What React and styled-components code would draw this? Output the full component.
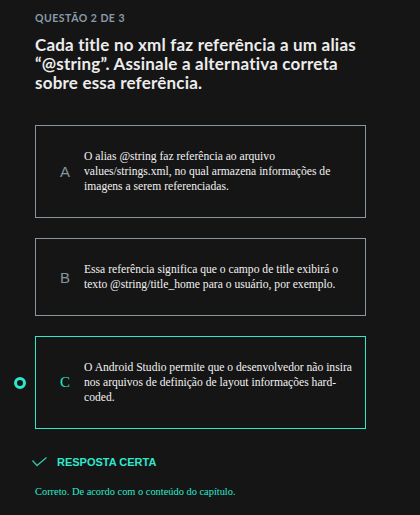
import React from "react";
import styled, { createGlobalStyle } from "styled-components";

const teal = "#2ee8cc";

const GlobalStyle = createGlobalStyle`
  html, body {
    margin: 0;
    background: #151515;
  }
`;

const options = [
  {
    letter: "A",
    text: "O alias @string faz referência ao arquivo values/strings.xml, no qual armazena informações de imagens a serem referenciadas.",
  },
  {
    letter: "B",
    text: "Essa referência significa que o campo de title exibirá o texto @string/title_home para o usuário, por exemplo.",
  },
  {
    letter: "C",
    text: "O Android Studio permite que o desenvolvedor não insira nos arquivos de definição de layout informações hard-coded.",
    selected: true,
  },
];

function App() {
  return (
    <>
      <GlobalStyle />
      <Page>
        <Gutter />
        <Header>
          <Counter>QUESTÃO 2 DE 3</Counter>
          <Title>
            Cada title no xml faz referência a um alias “@string”. Assinale a
            alternativa correta sobre essa referência.
          </Title>
        </Header>

        {options.map((opt) => (
          <React.Fragment key={opt.letter}>
            <Gutter>{opt.selected && <Radio />}</Gutter>
            <OptionBox $selected={opt.selected}>
              <Letter $selected={opt.selected}>{opt.letter}</Letter>
              <OptionText>{opt.text}</OptionText>
            </OptionBox>
          </React.Fragment>
        ))}

        <Gutter />
        <Feedback>
          <Verdict>
            <svg width="15" height="10" viewBox="0 0 15 10">
              <polyline
                points="0.5,3.5 5,8.5 14.5,0.5"
                fill="none"
                stroke="#3bbfae"
                strokeWidth="1.3"
              />
            </svg>
            <span>RESPOSTA CERTA</span>
          </Verdict>
          <Comment>Correto. De acordo com o conteúdo do capítulo.</Comment>
        </Feedback>
      </Page>
    </>
  );
}

export default App;

const Page = styled.div`
  display: grid;
  grid-template-columns: 35px 331px;
  row-gap: 20px;
  padding-top: 11px;
`;

const Gutter = styled.div`
  display: flex;
  align-items: center;
  justify-content: center;
  padding-left: 5px;
`;

const Header = styled.div`
  display: flex;
  flex-direction: column;
  gap: 10px;
  margin-bottom: 13px;
`;

const Counter = styled.div`
  font-family: Lato, sans-serif;
  font-weight: 700;
  font-size: 10.5px;
  line-height: 14px;
  color: #8b9ba7;
  letter-spacing: 0.5px;
`;

const Title = styled.h1`
  margin: 0;
  font-family: Lato, sans-serif;
  font-weight: 700;
  font-size: 17px;
  line-height: 19px;
  color: #ececec;
  letter-spacing: 0.2px;
`;

const OptionBox = styled.div`
  display: flex;
  align-items: center;
  border: 1px solid ${(p) => (p.$selected ? teal : "#8a969e")};
  padding: 23px 6px 23px 22px;
  min-height: 30px;
`;

const Letter = styled.div`
  width: 14px;
  flex-shrink: 0;
  margin-right: 12px;
  text-align: center;
  font-family: ${(p) =>
    p.$selected ? '"Liberation Serif", serif' : '"Liberation Sans", sans-serif'};
  font-size: 15px;
  color: ${(p) => (p.$selected ? teal : "#8495a0")};
`;

const OptionText = styled.div`
  font-family: "Liberation Serif", serif;
  font-size: 11.6px;
  line-height: 15px;
  color: #f2f2f2;
`;

const Radio = styled.span`
  width: 6px;
  height: 6px;
  border-radius: 50%;
  border: 3.5px solid ${teal};
  background: #151515;
`;

const Feedback = styled.div`
  display: flex;
  flex-direction: column;
  gap: 18px;
  margin-top: 7px;
`;

const Verdict = styled.div`
  display: flex;
  align-items: center;
  gap: 10px;
  margin-left: -3px;
  font-family: "Liberation Sans", sans-serif;
  font-weight: 700;
  font-size: 11px;
  color: ${teal};
`;

const Comment = styled.div`
  font-family: "Liberation Serif", serif;
  font-size: 10.4px;
  color: ${teal};
`;
